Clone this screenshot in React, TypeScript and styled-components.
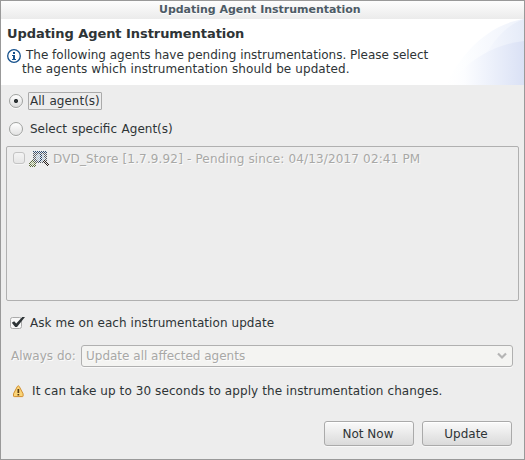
import React from "react";
import styled, { createGlobalStyle, css } from "styled-components";

const GlobalStyle = createGlobalStyle`
  * { box-sizing: border-box; }
  body { margin: 0; font: 12px/14px "DejaVu Sans", sans-serif; color: #2e3436; }
`;

const Dialog = styled.main`
  display: flex;
  flex-direction: column;
  width: 525px;
  height: 460px;
  border: 1px solid #999;
  background: #ededed;
  white-space: nowrap;
  overflow: hidden;
`;

const TitleBar = styled.div`
  height: 18px;
  padding-left: 158px;
  font-size: 11px;
  font-weight: bold;
  line-height: 17px;
  letter-spacing: -0.02px;
  color: #4d5b66;
  text-shadow: 0 1px #fff;
  background: linear-gradient(#fdfdfd, #ebebeb);
`;

const Header = styled.header`
  display: flex;
  justify-content: space-between;
  height: 66px;
  background: #fff;
`;

const HeaderText = styled.div`
  padding: 7px 0 0 6px;
`;

const Heading = styled.h1`
  margin: 0;
  font-size: 13px;
  line-height: 16px;
  letter-spacing: -0.06px;
`;

const Message = styled.div`
  display: flex;
  gap: 5px;
  margin-top: 6px;
  svg { flex: none; margin-top: 1px; }
`;

const MessageText = styled.p`
  margin: 0;
  text-indent: 4px;
  margin-left: -4px;
`;

const Spaced = styled.span<{ $tracking: number }>`
  letter-spacing: ${(p) => p.$tracking}px;
`;

const Body = styled.section`
  display: flex;
  flex-direction: column;
  padding: 0 5px;
`;

const OptionRow = styled.label<{ $height: number }>`
  display: flex;
  align-items: center;
  height: ${(p) => p.$height}px;
  padding-left: 3px;
`;

const Radio = styled.span<{ $selected?: boolean }>`
  width: 14px;
  height: 14px;
  border: 1px solid #a0a2a0;
  border-radius: 50%;
  background: ${(p) =>
    p.$selected
      ? "radial-gradient(circle, #2e3436 1.7px, transparent 2.4px), linear-gradient(#fff, #ddd)"
      : "linear-gradient(#fff, #e2e2e2)"};
  box-shadow: 0 1px #f9f9f9;
`;

const RadioText = styled.span<{ $focused?: boolean }>`
  height: 18px;
  margin-left: 5px;
  padding: 1px 1px 0;
  border: 1px solid ${(p) => (p.$focused ? "#aaa" : "transparent")};
  border-radius: 1px;
  word-spacing: 0.8px;
`;

const disabled = css`
  color: #a8a8a6;
  text-shadow: 1px 1px #fbfbfb;
`;

const AgentList = styled.div`
  height: 155px;
  margin-top: 5px;
  border: 1px solid #b0b0b0;
  border-radius: 2px;
`;

const AgentItem = styled.div`
  display: flex;
  align-items: center;
  height: 24px;
  padding-left: 6px;
  ${disabled}
  svg { margin: 0 4px 0 4px; }
`;

const DisabledCheck = styled.span`
  width: 12px;
  height: 12px;
  margin-bottom: 2px;
  border: 1px solid #c4c4c4;
  border-radius: 3px;
  background: linear-gradient(#f4f4f4, #e6e6e6);
  box-shadow: 0 1px #f6f6f6;
`;

const AskRow = styled.label`
  display: flex;
  align-items: center;
  height: 24px;
  margin-top: 10px;
  padding-left: 4px;
  gap: 4px;
`;

const PolicyRow = styled.div`
  display: flex;
  align-items: center;
  height: 22px;
  margin-top: 10px;
  padding-left: 5px;
  ${disabled}
`;

const Combo = styled.div`
  display: flex;
  align-items: center;
  justify-content: space-between;
  width: 432px;
  height: 22px;
  margin-left: auto;
  margin-right: 6px;
  padding: 0 5px 0 4px;
  border: 1px solid #b0b0b0;
  border-radius: 3px;
  background: #f4f4f2;
  box-shadow: 0 1px #f9f9f9;
`;

const Notice = styled.div`
  display: flex;
  align-items: center;
  height: 20px;
  margin-top: 14px;
  padding-left: 6px;
  gap: 7px;
`;

const Actions = styled.footer`
  display: flex;
  justify-content: flex-end;
  gap: 8px;
  margin-top: 20px;
  padding-right: 7px;
`;

const Button = styled.button`
  width: 90px;
  height: 25px;
  padding: 0 2px 0 0;
  border: 1px solid #aaa;
  border-radius: 3px;
  font: inherit;
  color: inherit;
  background: linear-gradient(#fafafa, #dadada);
  box-shadow: 0 1px #f8f8f8, inset 0 1px #fff;
`;

const InfoIcon = () => (
  <svg width="14" height="14" viewBox="0 0 14 14">
    <circle cx="7" cy="7" r="6.3" fill="#fff" stroke="#14508c" strokeWidth="1.3" />
    <path d="M6 3h2v2H6zM5 6h3v4h1v1H5v-1h1V7H5z" fill="#14508c" />
  </svg>
);

const HeaderArt = () => (
  <svg width="78" height="66" viewBox="-6 0 78 66">
    <defs>
      <linearGradient id="outer">
        <stop offset="0" stopColor="#fff" />
        <stop offset=".2" stopColor="#fdfeff" />
        <stop offset="1" stopColor="#eef2fb" />
      </linearGradient>
      <linearGradient id="middle">
        <stop offset="0" stopColor="#fbfcff" />
        <stop offset="1" stopColor="#e5ebf8" />
      </linearGradient>
      <linearGradient id="inner">
        <stop offset="0" stopColor="#fff" />
        <stop offset=".2" stopColor="#fcfdff" />
        <stop offset=".55" stopColor="#edf1fb" />
        <stop offset="1" stopColor="#dae1f5" />
      </linearGradient>
    </defs>
    <path d="M-6 66C6 40 32 6 72 0V66z" fill="url(#outer)" />
    <path d="M20 66C30 38 46 9 72 0V66z" fill="url(#middle)" />
    <path d="M-3 66C14 42 42 25 72 22V66z" fill="url(#inner)" />
  </svg>
);

const AgentIcon = () => (
  <svg width="20" height="16" viewBox="0 0 20 16">
    <defs>
      <pattern id="stipple" width="2" height="2" patternUnits="userSpaceOnUse">
        <path d="M0 0h1v1H0zM1 1h1v1H1z" fill="#fff" />
      </pattern>
      <mask id="dither" maskUnits="userSpaceOnUse" x="0" y="0" width="20" height="16">
        <rect width="20" height="16" fill="url(#stipple)" shapeRendering="crispEdges" />
      </mask>
    </defs>
    <g mask="url(#dither)" shapeRendering="crispEdges">
      <path d="M4 0h14v12H4z" fill="#5a6068" />
      <path d="M4 0h14v2H4z" fill="#2c4a70" />
      <circle cx="11.5" cy="7" r="4.3" fill="#a9bccd" />
      <path d="M11 3h2v5l-2 3h-2l2-3z" fill="#27456b" />
      <path d="M14 10l2-1 4 5-1 2z" fill="#2b211c" />
      <circle cx="3.5" cy="12.5" r="3.5" fill="#5d6d3d" />
      <circle cx="3.5" cy="12.5" r="2" fill="#a3b47e" />
    </g>
  </svg>
);

const CheckIcon = () => (
  <svg width="16" height="14" viewBox="0 0 16 14">
    <rect x=".5" y="1.5" width="11" height="11" rx="2" fill="#f7f7f7" stroke="#aaa" />
    <path d="M1.8 6.7L4.2 5.2L6.2 7.6L12.3 1H15L7 11H5.2z" fill="#2e3436" />
  </svg>
);

const WarningIcon = () => (
  <svg width="13" height="13" viewBox="0 0 13 13">
    <path
      d="M5.3 1.5q1-1.5 2 0l3.8 7.3v2.2q0 .6-.7.6H2.2q-.7 0-.7-.6V8.8z"
      fill="#fbd477"
      stroke="#d18f30"
    />
    <path d="M5.5 4h1.7v4H5.5zM5.5 9h1.7v1.5H5.5z" fill="#573b13" />
  </svg>
);

const ChevronIcon = () => (
  <svg width="10" height="8" viewBox="0 0 10 8">
    <path d="M1 1.5l4 4 4-4" fill="none" stroke="#b5b5b5" strokeWidth="2.2" />
  </svg>
);

export default function App() {
  return (
    <>
      <GlobalStyle />
      <Dialog>
        <TitleBar>Updating Agent Instrumentation</TitleBar>
        <Header>
          <HeaderText>
            <Heading>Updating Agent Instrumentation</Heading>
            <Message>
              <InfoIcon />
              <MessageText>
                <Spaced $tracking={-0.01}>
                  The following agents have pending instrumentations. Please select
                </Spaced>
                <br />
                <Spaced $tracking={0.09}>
                  the agents which instrumentation should be updated.
                </Spaced>
              </MessageText>
            </Message>
          </HeaderText>
          <HeaderArt />
        </Header>
        <Body>
          <OptionRow $height={32}>
            <Radio $selected />
            <RadioText $focused>All agent(s)</RadioText>
          </OptionRow>
          <OptionRow $height={24}>
            <Radio />
            <RadioText>Select specific Agent(s)</RadioText>
          </OptionRow>
          <AgentList>
            <AgentItem>
              <DisabledCheck />
              <AgentIcon />
              <Spaced $tracking={0.15}>
                DVD_Store [1.7.9.92] - Pending since: 04/13/2017 02:41 PM
              </Spaced>
            </AgentItem>
          </AgentList>
          <AskRow>
            <CheckIcon />
            <Spaced $tracking={0.06}>Ask me on each instrumentation update</Spaced>
          </AskRow>
          <PolicyRow>
            Always do:
            <Combo>
              Update all affected agents
              <ChevronIcon />
            </Combo>
          </PolicyRow>
          <Notice>
            <WarningIcon />
            <Spaced $tracking={0.09}>
              It can take up to 30 seconds to apply the instrumentation changes.
            </Spaced>
          </Notice>
          <Actions>
            <Button>Not Now</Button>
            <Button>Update</Button>
          </Actions>
        </Body>
      </Dialog>
    </>
  );
}
